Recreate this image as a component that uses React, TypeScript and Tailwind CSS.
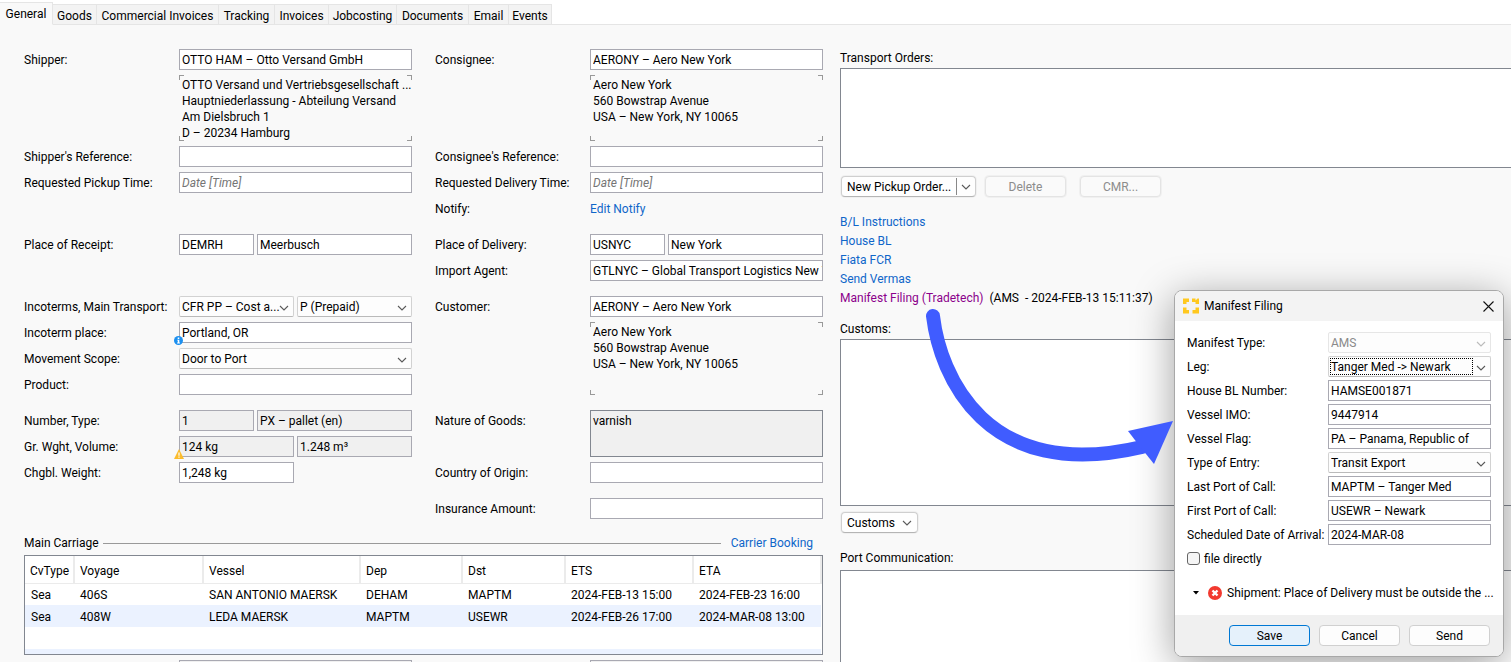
import { useState } from "react";
import type { ReactNode } from "react";

const fieldBox = "h-[21px] w-full min-w-0 border border-[#a9a9b2] pl-[2px] pr-0 text-black outline-none";

function Chevron({ className = "" }: { className?: string }) {
  return (
    <svg viewBox="0 0 10 6" className={`h-[6px] w-[10px] fill-none stroke-[#5a5a5a] ${className}`} aria-hidden="true">
      <path d="M1 1 L5 5 L9 1" strokeWidth="1.1" />
    </svg>
  );
}

type TextProps = { id?: string; label?: string; value?: string; placeholder?: string; gray?: boolean };

function Text({ id, label, value = "", placeholder, gray }: TextProps) {
  return (
    <input
      id={id}
      aria-label={label}
      type="text"
      defaultValue={value}
      placeholder={placeholder}
      readOnly={gray}
      className={`${fieldBox} placeholder:italic placeholder:text-[#757575] ${gray ? "bg-[#f0f0f0]" : "bg-white"}`}
    />
  );
}

type SelectProps = { id?: string; label?: string; value: string; disabled?: boolean; focused?: boolean };

function Select({ id, label, value, disabled, focused }: SelectProps) {
  return (
    <span className="relative block w-full min-w-0">
      <select
        id={id}
        aria-label={label}
        disabled={disabled}
        className={`block h-[21px] w-full appearance-none rounded-[2px] border bg-[#fdfdfd] pr-3 pl-[2px] outline-none ${
          disabled ? "border-[#e6e6e6] text-[#8a8a8a] opacity-100" : "border-[#d2d2d2] border-b-[#bababa] text-black"
        }`}
      >
        <option>{value}</option>
      </select>
      {focused && (
        <span className="pointer-events-none absolute inset-y-[2px] right-[18px] left-[2px] border border-dotted border-black" />
      )}
      <Chevron className={`pointer-events-none absolute top-[9px] right-[5px] ${disabled ? "opacity-40" : ""}`} />
    </span>
  );
}

function Row({ label, id, children, top }: { label: string; id?: string; children: ReactNode; top?: boolean }) {
  return (
    <div className={`flex min-h-[21px] ${top ? "items-start" : "items-center"}`}>
      <label htmlFor={id} className={`w-[155px] shrink-0 whitespace-nowrap ${top ? "pt-[3px]" : ""}`}>
        {label}
      </label>
      <div className="relative flex min-w-0 flex-1 gap-[3px]">{children}</div>
    </div>
  );
}

function Address({ lines, tall }: { lines: string[]; tall?: boolean }) {
  return (
    <div className={`relative ml-[155px] pt-[2px] pl-[3px] leading-4 ${tall ? "h-[73px]" : "h-[66px]"}`}>
      <span className="absolute top-0 left-0 size-[5px] border-t border-l border-[#999]" />
      <span className="absolute top-0 right-0 size-[5px] border-t border-r border-[#999]" />
      <span className="absolute bottom-0 left-0 size-[5px] border-b border-l border-[#999]" />
      <span className="absolute right-0 bottom-0 size-[5px] border-r border-b border-[#999]" />
      {lines.map((line) => (
        <p key={line} className="whitespace-nowrap">
          {line}
        </p>
      ))}
    </div>
  );
}

const tabs = ["Goods", "Commercial Invoices", "Tracking", "Invoices", "Jobcosting", "Documents", "Email", "Events"];
const tabWidths = ["w-11", "w-[122px]", "w-14", "w-[54px]", "w-[68px]", "w-[72px]", "w-10", "w-[43px]"];

function Tabs() {
  return (
    <nav role="tablist" className="flex h-[25px] shrink-0 items-end border-b border-[#e5e5e5] bg-white">
      <button
        role="tab"
        aria-selected="true"
        className="-mb-px h-[23px] w-[53px] border border-l-0 border-[#e5e5e5] border-b-[#f9f9f9] bg-[#f9f9f9] text-center"
      >
        General
      </button>
      {tabs.map((tab, i) => (
        <button
          key={tab}
          role="tab"
          aria-selected="false"
          className={`flex h-5 items-center justify-center border-t border-r border-[#e5e5e5] bg-[#f3f3f3] pt-[2px] whitespace-nowrap ${tabWidths[i]}`}
        >
          {tab}
        </button>
      ))}
    </nav>
  );
}

const columns = ["CvType", "Voyage", "Vessel", "Dep", "Dst", "ETS", "ETA"];
const columnWidths = ["w-[49px]", "w-[129px]", "w-[157px]", "w-[102px]", "w-[103px]", "w-[128px]", "w-[128px]"];
const voyages = [
  ["Sea", "406S", "SAN ANTONIO MAERSK", "DEHAM", "MAPTM", "2024-FEB-13 15:00", "2024-FEB-23 16:00"],
  ["Sea", "408W", "LEDA MAERSK", "MAPTM", "USEWR", "2024-FEB-26 17:00", "2024-MAR-08 13:00"],
];

function MainCarriage() {
  return (
    <section className="mt-4">
      <div className="flex h-4 items-center">
        <h2>Main Carriage</h2>
        <span className="ml-1 h-px flex-1 bg-[#999]" />
        <a href="#carrier-booking" className="mr-[10px] ml-[10px] text-[#0f66c9]">
          Carrier Booking
        </a>
      </div>
      <div className="mt-1 h-[100px] overflow-hidden border border-[#828790] bg-white">
        <table className="table-fixed border-collapse">
          <thead>
            <tr className="h-[27px]">
              {columns.map((column, i) => (
                <th
                  key={column}
                  className={`border-r-2 border-b border-[#ebebeb] pt-[3px] pl-[5px] text-left font-normal ${columnWidths[i]}`}
                >
                  {column}
                </th>
              ))}
            </tr>
          </thead>
          <tbody>
            {voyages.map((row) => (
              <tr key={row[1]} className="h-[22px] even:bg-[#ebf2ff]">
                {row.map((cell, i) => (
                  <td key={columns[i]} className="pt-px pl-[6px] whitespace-nowrap">
                    {cell}
                  </td>
                ))}
              </tr>
            ))}
            <tr className="h-[22px]">
              <td colSpan={7} />
            </tr>
            <tr className="h-[22px] bg-[#ebf2ff]">
              <td colSpan={7} />
            </tr>
          </tbody>
        </table>
      </div>
    </section>
  );
}

const pushButton = "h-[21px] rounded-[4px] border text-center ring-1 ring-[#f0f0f0]";

function SidePanel() {
  return (
    <aside className="flex min-w-0 flex-1 flex-col pt-[25px]">
      <h2 className="h-[18px] leading-4">Transport Orders:</h2>
      <div className="h-[100px] border border-r-0 border-[#828790] bg-white" />
      <div className="mt-2 ml-px flex">
        <div className="flex h-[21px] w-[135px] items-center rounded-[4px] border border-[#cfcfcf] border-b-[#b5b5b5] bg-[#fefefe] ring-1 ring-[#f0f0f0]">
          <button className="flex-1 pl-[5px] text-left whitespace-nowrap">New Pickup Order...</button>
          <button
            aria-label="More order types"
            className="flex h-[17px] w-[19px] items-center justify-center border-l border-[#888]"
          >
            <Chevron />
          </button>
        </div>
        <button disabled className={`${pushButton} ml-[9px] w-[81px] border-[#e4e4e4] bg-[#fafafa] text-[#8c8c8c]`}>
          Delete
        </button>
        <button disabled className={`${pushButton} ml-[14px] w-[81px] border-[#e4e4e4] bg-[#fafafa] text-[#8c8c8c]`}>
          CMR...
        </button>
      </div>
      <ul className="mt-4 leading-[19px] text-[#0f66c9]">
        <li>
          <a href="#bl-instructions">B/L Instructions</a>
        </li>
        <li>
          <a href="#house-bl">House BL</a>
        </li>
        <li>
          <a href="#fiata-fcr">Fiata FCR</a>
        </li>
        <li>
          <a href="#send-vermas">Send Vermas</a>
        </li>
        <li className="flex gap-[6px] text-black">
          <a href="#manifest-filing" className="text-[#8b008b]">
            Manifest Filing (Tradetech)
          </a>
          <span className="whitespace-pre">(AMS  - 2024-FEB-13 15:11:37)</span>
        </li>
      </ul>
      <h2 className="mt-[13px] h-[18px] leading-4">Customs:</h2>
      <div className="h-[167px] border border-r-0 border-[#828790] bg-white" />
      <button
        className={`${pushButton} mt-[6px] ml-px flex w-[77px] shrink-0 items-center justify-between border-[#cfcfcf] border-b-[#b5b5b5] bg-[#fefefe] pr-[5px] pl-[5px]`}
      >
        Customs
        <Chevron />
      </button>
      <h2 className="mt-[17px] h-5 leading-4">Port Communication:</h2>
      <div className="flex-1 border border-r-0 border-b-0 border-[#828790] bg-white" />
    </aside>
  );
}

function FormRow({ label, id, children }: { label: string; id: string; children: ReactNode }) {
  return (
    <div className="flex items-center">
      <label htmlFor={id} className="w-[141px] shrink-0 whitespace-nowrap">
        {label}
      </label>
      {children}
    </div>
  );
}

function ManifestDialog() {
  const [direct, setDirect] = useState(false);
  return (
    <div
      role="dialog"
      aria-labelledby="manifest-title"
      className="absolute top-[290px] left-[1174px] w-[330px] overflow-hidden rounded-lg border border-[#a8a8a8] bg-white shadow-[0_8px_40px_rgba(0,0,0,0.38)]"
    >
      <header className="flex h-[30px] items-center bg-[#f3f3f3] pr-[9px] pl-2">
        <svg viewBox="0 0 16 16" className="size-4 fill-[#ffc81e]" aria-hidden="true">
          <path d="M0 0.5h6v3.5H3.5v2H0zM9 0.5h3.5v2L14.5 0.5H16V6h-3.5V4H9zM0 9.5h3.5v2.5H6v3.5H0zM12.5 9.5H16v6H9.5V12h3z" />
        </svg>
        <h2 id="manifest-title" className="ml-[5px] flex-1">
          Manifest Filing
        </h2>
        <button aria-label="Close">
          <svg viewBox="0 0 11 11" className="size-[11px] stroke-[#111]" aria-hidden="true">
            <path d="M0.5 0.5 L10.5 10.5 M10.5 0.5 L0.5 10.5" strokeWidth="1.1" />
          </svg>
        </button>
      </header>
      <form className="flex flex-col gap-[3px] px-3 pt-[11px]">
        <FormRow label="Manifest Type:" id="manifest-type">
          <Select id="manifest-type" value="AMS" disabled />
        </FormRow>
        <FormRow label="Leg:" id="leg">
          <Select id="leg" value="Tanger Med -> Newark" focused />
        </FormRow>
        <FormRow label="House BL Number:" id="house-bl-number">
          <Text id="house-bl-number" value="HAMSE001871" />
        </FormRow>
        <FormRow label="Vessel IMO:" id="vessel-imo">
          <Text id="vessel-imo" value="9447914" />
        </FormRow>
        <FormRow label="Vessel Flag:" id="vessel-flag">
          <Text id="vessel-flag" value="PA – Panama, Republic of" />
        </FormRow>
        <FormRow label="Type of Entry:" id="entry-type">
          <Select id="entry-type" value="Transit Export" />
        </FormRow>
        <FormRow label="Last Port of Call:" id="last-port">
          <Text id="last-port" value="MAPTM – Tanger Med" />
        </FormRow>
        <FormRow label="First Port of Call:" id="first-port">
          <Text id="first-port" value="USEWR – Newark" />
        </FormRow>
        <FormRow label="Scheduled Date of Arrival:" id="arrival">
          <Text id="arrival" value="2024-MAR-08" />
        </FormRow>
        <label className="flex h-[21px] items-center gap-1">
          <input
            type="checkbox"
            checked={direct}
            onChange={(e) => setDirect(e.target.checked)}
            className="size-[13px] appearance-none rounded-[3px] border border-[#666] bg-[#f5f5f5] checked:bg-[#0067c0]"
          />
          file directly
        </label>
      </form>
      <div className="flex h-[46px] items-center px-3 pt-[2px]">
        <button aria-label="Toggle messages" className="ml-[6px]">
          <svg viewBox="0 0 6 4" className="h-1 w-[6px] fill-black" aria-hidden="true">
            <path d="M0 0h6L3 3.5z" />
          </svg>
        </button>
        <svg viewBox="0 0 14 14" className="ml-[9px] size-[14px] shrink-0" aria-hidden="true">
          <circle cx="7" cy="7" r="7" fill="#f2392f" />
          <path d="M4.5 4.5l5 5M9.5 4.5l-5 5" stroke="#fff" strokeWidth="2.4" />
        </svg>
        <p className="ml-[5px] flex-1 whitespace-nowrap">Shipment: Place of Delivery must be outside the ...</p>
      </div>
      <footer className="flex h-[41px] justify-end gap-[9px] bg-[#f0f0f0] pt-[10px] pr-[13px]">
        <button className="h-[21px] w-[81px] rounded-[4px] border border-[#0078d4] bg-[#e5f1fb]">Save</button>
        <button className="h-[21px] w-[81px] rounded-[4px] border border-[#d0d0d0] bg-[#fdfdfd]">Cancel</button>
        <button className="h-[21px] w-[81px] rounded-[4px] border border-[#d0d0d0] bg-[#fdfdfd]">Send</button>
      </footer>
    </div>
  );
}

export default function App() {
  return (
    <div className="relative flex h-screen flex-col overflow-hidden bg-[#f9f9f9] font-['Roboto','Noto_Sans',sans-serif] text-[12px] leading-4 text-black">
      <Tabs />
      <main className="flex min-h-0 flex-1">
        <div className="mr-[17px] ml-6 w-[799px] shrink-0 pt-6">
          <div className="grid grid-cols-2 gap-x-[23px]">
            <div className="flex flex-col gap-[5px]">
              <Row label="Shipper:" id="shipper">
                <Text id="shipper" value="OTTO HAM – Otto Versand GmbH" />
              </Row>
              <Address
                lines={[
                  "OTTO Versand und Vertriebsgesellschaft ...",
                  "Hauptniederlassung - Abteilung Versand",
                  "Am Dielsbruch 1",
                  "D – 20234 Hamburg",
                ]}
              />
              <Row label="Shipper's Reference:" id="shipper-ref">
                <Text id="shipper-ref" />
              </Row>
              <Row label="Requested Pickup Time:" id="pickup-time">
                <Text id="pickup-time" placeholder="Date [Time]" />
              </Row>
              <div className="mt-9">
                <Row label="Place of Receipt:" id="receipt">
                  <div className="w-[75px] shrink-0">
                    <Text id="receipt" value="DEMRH" />
                  </div>
                  <Text label="Place of receipt name" value="Meerbusch" />
                </Row>
              </div>
              <div className="mt-9">
                <Row label="Incoterms, Main Transport:" id="incoterms">
                  <Select id="incoterms" value="CFR PP – Cost a..." />
                  <Select label="Main transport" value="P (Prepaid)" />
                </Row>
              </div>
              <Row label="Incoterm place:" id="incoterm-place">
                <Text id="incoterm-place" value="Portland, OR" />
                <svg viewBox="0 0 9 9" className="absolute -bottom-[2px] -left-[5px] size-[9px]" aria-hidden="true">
                  <circle cx="4.5" cy="4.5" r="4.5" fill="#1c90f0" />
                  <path d="M3.7 1.6h1.6v1.3H3.7zM3.2 3.7h2.1v2.8h.6v.9H3.1v-.9h.7V4.6h-.6z" fill="#fff" />
                </svg>
              </Row>
              <Row label="Movement Scope:" id="scope">
                <Select id="scope" value="Door to Port" />
              </Row>
              <Row label="Product:" id="product">
                <Text id="product" />
              </Row>
              <div className="mt-[10px]">
                <Row label="Number, Type:" id="number">
                  <div className="w-[75px] shrink-0">
                    <Text id="number" value="1" gray />
                  </div>
                  <Text label="Package type" value="PX – pallet (en)" gray />
                </Row>
              </div>
              <Row label="Gr. Wght, Volume:" id="weight">
                <Text id="weight" value="124 kg" gray />
                <Text label="Volume" value="1.248 m³" gray />
                <svg viewBox="0 0 10 10" className="absolute -bottom-[2px] -left-[5px] size-[10px]" aria-hidden="true">
                  <path d="M5 0l5 10H0z" fill="#fbbc2c" />
                  <path d="M4.4 3.5h1.2v3.2H4.4zM4.4 7.5h1.2v1.2H4.4z" fill="#fff" />
                </svg>
              </Row>
              <Row label="Chgbl. Weight:" id="chargeable">
                <div className="w-[115px]">
                  <Text id="chargeable" value="1,248 kg" />
                </div>
              </Row>
            </div>

            <div className="flex flex-col gap-[5px]">
              <Row label="Consignee:" id="consignee">
                <Text id="consignee" value="AERONY – Aero New York" />
              </Row>
              <Address lines={["Aero New York", "560 Bowstrap Avenue", "USA – New York, NY 10065"]} />
              <Row label="Consignee's Reference:" id="consignee-ref">
                <Text id="consignee-ref" />
              </Row>
              <Row label="Requested Delivery Time:" id="delivery-time">
                <Text id="delivery-time" placeholder="Date [Time]" />
              </Row>
              <Row label="Notify:">
                <a href="#edit-notify" className="text-[#0f66c9]">
                  Edit Notify
                </a>
              </Row>
              <div className="mt-[10px]">
                <Row label="Place of Delivery:" id="delivery">
                  <div className="w-[75px] shrink-0">
                    <Text id="delivery" value="USNYC" />
                  </div>
                  <Text label="Place of delivery name" value="New York" />
                </Row>
              </div>
              <Row label="Import Agent:" id="agent">
                <Text id="agent" value="GTLNYC – Global Transport Logistics New York" />
              </Row>
              <div className="mt-[10px]">
                <Row label="Customer:" id="customer">
                  <Text id="customer" value="AERONY – Aero New York" />
                </Row>
              </div>
              <Address tall lines={["Aero New York", "560 Bowstrap Avenue", "USA – New York, NY 10065"]} />
              <div className="mt-[10px]">
                <Row label="Nature of Goods:" id="nature" top>
                  <textarea
                    id="nature"
                    readOnly
                    defaultValue="varnish"
                    className="block h-[47px] w-full resize-none border border-[#828790] bg-[#f0f0f0] pt-[2px] pl-[2px] leading-4 outline-none"
                  />
                </Row>
              </div>
              <Row label="Country of Origin:" id="origin">
                <Text id="origin" />
              </Row>
              <div className="mt-[10px]">
                <Row label="Insurance Amount:" id="insurance">
                  <Text id="insurance" />
                </Row>
              </div>
            </div>
          </div>
          <MainCarriage />
          <div className="mt-[5px] grid grid-cols-2 gap-x-[23px]">
            <div className="pl-[155px]">
              <Text label="Carriage remark" gray />
            </div>
            <div className="pl-[155px]">
              <Text label="Carriage reference" gray />
            </div>
          </div>
        </div>
        <SidePanel />
      </main>
      <ManifestDialog />
      <svg
        viewBox="0 0 250 160"
        className="pointer-events-none absolute top-[306px] left-[924px] h-[160px] w-[250px]"
        aria-hidden="true"
      >
        <path d="M9 10 C16 69 61 178 218 141" fill="none" stroke="#405cff" strokeWidth="14" strokeLinecap="round" />
        <path d="M204 125 L249 115 L230 158 L214 138 Z" fill="#405cff" />
      </svg>
    </div>
  );
}
